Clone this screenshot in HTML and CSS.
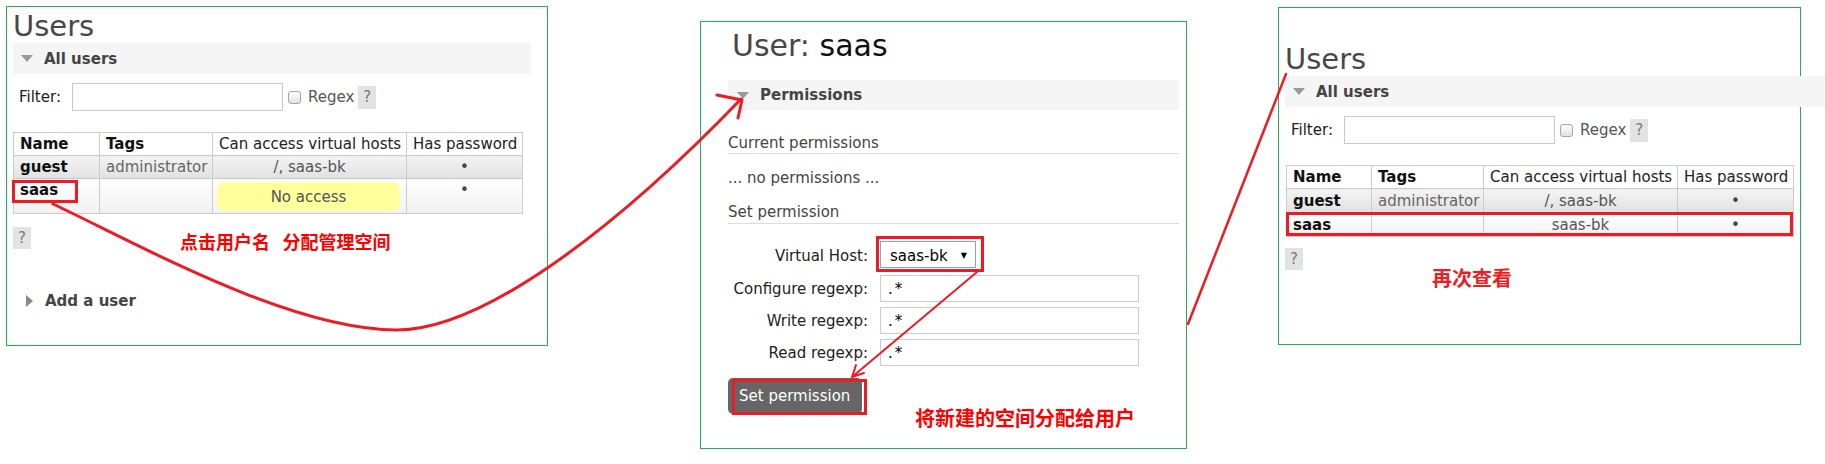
FILE: index.html
```html
<!DOCTYPE html>
<html>
<head>
<meta charset="utf-8">
<title>Users</title>
<link rel="stylesheet" href="styles.css">
</head>
<body>
<div class="canvas">
  <section class="panel p1">
    <h1 class="title">Users</h1>
    <div class="sect open"><span class="tri-down"></span>All users</div>
    <div class="filter">
      <label class="flabel">Filter:</label>
      <input class="ftext" type="text">
      <input class="chk" type="checkbox">
      <span class="regex">Regex</span>
      <span class="help">?</span>
    </div>
    <table class="list">
      <colgroup><col class="c1"><col class="c2"><col class="c3"><col class="c4"></colgroup>
      <thead>
        <tr><th class="b">Name</th><th class="b">Tags</th><th class="n">Can access virtual hosts</th><th class="n">Has password</th></tr>
      </thead>
      <tbody>
        <tr class="alt1"><td class="name">guest</td><td class="tags">administrator</td><td class="c">/, saas-bk</td><td class="c dot">•</td></tr>
        <tr class="alt2"><td class="name">saas</td><td></td><td class="wcell"><div class="warn">No access</div></td><td class="c dot">•</td></tr>
      </tbody>
    </table>
    <span class="help help-block">?</span>
    <div class="sect closed"><span class="tri-right"></span>Add a user</div>
    <p class="note n1">点击用户名&nbsp;&nbsp;分配管理空间</p>
  </section>

  <section class="panel p2">
    <h1 class="title">User: <span class="uname">saas</span></h1>
    <div class="sect open"><span class="tri-down"></span>Permissions</div>
    <h3 class="sub s1">Current permissions</h3>
    <p class="empty">... no permissions ...</p>
    <h3 class="sub s2">Set permission</h3>
    <div class="form">
      <label>Virtual Host:</label>
      <div class="select"><span>saas-bk</span><span class="arrow">▼</span></div>
      <label>Configure regexp:</label>
      <input type="text" value=".*">
      <label>Write regexp:</label>
      <input type="text" value=".*">
      <label>Read regexp:</label>
      <input type="text" value=".*">
    </div>
    <button class="btn" type="button">Set permission</button>
    <p class="note n2">将新建的空间分配给用户</p>
  </section>

  <section class="panel p3">
    <h1 class="title">Users</h1>
    <div class="sect open"><span class="tri-down"></span>All users</div>
    <div class="filter">
      <label class="flabel">Filter:</label>
      <input class="ftext" type="text">
      <input class="chk" type="checkbox">
      <span class="regex">Regex</span>
      <span class="help">?</span>
    </div>
    <table class="list">
      <colgroup><col class="c1"><col class="c2"><col class="c3"><col class="c4"></colgroup>
      <thead>
        <tr><th class="b">Name</th><th class="b">Tags</th><th class="n">Can access virtual hosts</th><th class="n">Has password</th></tr>
      </thead>
      <tbody>
        <tr class="alt1"><td class="name">guest</td><td class="tags">administrator</td><td class="c">/, saas-bk</td><td class="c dot">•</td></tr>
        <tr class="alt2"><td class="name">saas</td><td></td><td class="c">saas-bk</td><td class="c dot">•</td></tr>
      </tbody>
    </table>
    <span class="help help-block">?</span>
    <p class="note n3">再次查看</p>
  </section>
</div>

<svg class="marks" width="1825" height="464" viewBox="0 0 1825 464">
  <g fill="none" stroke="#ed1c24" stroke-width="3" stroke-linecap="round" stroke-linejoin="round">
    <path d="M53 204 C140 245 290 330 397 330 C480 330 610 235 741 99"/>
    <path d="M717 95 L742 100 L738 118"/>
    <path d="M977 272 L852 377 M856 365 L852 377 L864 373" stroke-width="2"/>
    <path d="M1188 324 L1286 74" stroke-width="2.5"/>
  </g>
  <g fill="none" stroke="#ed1c24" stroke-width="3" stroke-linejoin="miter">
    <rect x="13.5" y="181.5" width="63" height="20"/>
    <rect x="877.5" y="237.5" width="105" height="33"/>
    <rect x="733.5" y="380.5" width="132" height="33"/>
    <rect x="1287.5" y="213.5" width="504" height="21"/>
  </g>
</svg>
</body>
</html>
```

FILE: styles.css
```css
* { box-sizing: border-box; }

html, body { margin: 0; padding: 0; }

body {
  width: 1825px;
  height: 464px;
  overflow: hidden;
  position: relative;
  background: #fff;
  font-family: "DejaVu Sans", Verdana, sans-serif;
  font-size: 15px;
  line-height: 18px;
  color: #444;
}

.canvas {
  display: flex;
  align-items: flex-start;
}

.panel {
  position: relative;
  border: 1px solid #22b14c;
}

.p1 { margin-left: 6px; margin-top: 6px; width: 542px; height: 340px; padding: 0 6px; }
.p2 { margin-left: 152px; margin-top: 21px; width: 487px; height: 428px; padding: 0 0 0 27px; }
.p3 { margin-left: 91px; margin-top: 7px; width: 523px; height: 338px; padding: 0 6px; }

.title {
  margin: 3px 0 0;
  font-size: 29px;
  line-height: 33px;
  font-weight: normal;
  color: #484848;
}
.p3 .title { margin-top: 35px; }
.p2 .title { font-size: 30px; line-height: 34px; margin-top: 7px; padding-left: 4px; }
.uname { color: #111; }

.sect {
  display: flex;
  align-items: center;
  height: 31px;
  font-weight: bold;
  color: #444;
}
.sect.open { background: #f5f5f5; padding-left: 8px; }
.p1 .sect.open { width: 518px; }
.p3 .sect.open { width: 540px; }
.p2 .sect.open { width: 451px; height: 30px; margin-top: 17px; padding-left: 9px; }
.sect.closed { margin-top: 36px; padding-left: 13px; }

.tri-down {
  width: 0; height: 0;
  border-left: 6.5px solid transparent;
  border-right: 6.5px solid transparent;
  border-top: 7px solid #9a9a9a;
  margin-right: 11px;
}
.tri-right {
  width: 0; height: 0;
  border-top: 6.5px solid transparent;
  border-bottom: 6.5px solid transparent;
  border-left: 7px solid #8a8a8a;
  margin-right: 12px;
}

.filter {
  display: flex;
  align-items: center;
  margin-top: 9px;
  padding-left: 6px;
  height: 28px;
  color: #222;
}
.ftext {
  width: 211px;
  height: 28px;
  border: 1px solid #c8c8c8;
  margin: 0 0 0 11px;
  padding: 0;
  background: #fff;
}
.chk {
  appearance: none;
  -webkit-appearance: none;
  width: 13px;
  height: 13px;
  margin: 0 0 0 5px;
  border: 1px solid #a5a5a5;
  border-radius: 3px;
  background: linear-gradient(#fdfdfd, #e2e2e2);
}
.regex { margin-left: 7px; color: #555; }
.help {
  display: inline-block;
  width: 18px;
  height: 23px;
  line-height: 23px;
  text-align: center;
  background: #e3e3e3;
  color: #777;
  margin-left: 4px;
}
.help-block { display: block; margin: 13px 0 0; height: 22px; line-height: 22px; }
.p3 .help-block { margin-top: 11px; }

.list {
  border-collapse: collapse;
  table-layout: fixed;
  width: 509px;
  margin-top: 21px;
}
.p3 .list { margin-left: 1px; width: 507px; }
.c1 { width: 86px; }
.c2 { width: 113px; }
.c3 { width: 194px; }
.c4 { width: 116px; }
.p3 .c1 { width: 85px; }
.p3 .c2 { width: 112px; }

.list th, .list td {
  border: 1px solid #ccc;
  padding: 2px 6px;
  line-height: 18px;
  text-align: left;
  vertical-align: top;
  white-space: nowrap;
  overflow: visible;
}
.list th { background: #fff; font-weight: normal; color: #222; }
.list th.b { font-weight: bold; color: #111; }
.list th.n { text-align: center; }
.list td.name { font-weight: bold; color: #111; }
.list td.tags { color: #666; }
.list td.c { text-align: center; color: #555; }
.list td.dot { color: #444; }
.p3 .list td { padding-top: 3px; }

.alt1 td { background: linear-gradient(#f4f4f4, #e1e1e1); }
.alt2 td { background: linear-gradient(#ffffff, #f1f1f1); }

.list td.wcell { padding: 3px 6px 2px 4px; }
.warn {
  background: #ffff9c;
  border-radius: 8px;
  text-align: center;
  padding: 6px 0 5px;
  color: #555;
}

.sub {
  margin: 24px 0 0;
  width: 451px;
  font-size: 15px;
  font-weight: normal;
  line-height: 18px;
  padding-bottom: 1px;
  border-bottom: 1px solid #ddd;
  color: #444;
}
.sub.s2 { margin-top: 16px; padding-bottom: 2px; }
.empty { margin: 15px 0 0; color: #444; }

.form {
  display: grid;
  grid-template-columns: 140px 259px;
  column-gap: 12px;
  row-gap: 5px;
  align-items: baseline;
  margin-top: 17px;
  color: #222;
}
.form label { text-align: right; }
.select {
  width: 96px;
  height: 27px;
  border: 1px solid #7ea6d6;
  display: flex;
  align-items: center;
  padding: 2px 8px 0 9px;
  color: #000;
  margin-bottom: 2px;
  background: #fff;
}
.select .arrow { margin-left: auto; font-size: 8px; line-height: 10px; }
.form input {
  width: 259px;
  height: 27px;
  border: 1px solid #ccc;
  padding: 0 0 0 7px;
  margin: 0;
  font: 15px "DejaVu Sans", Verdana, sans-serif;
  letter-spacing: 2px;
  color: #000;
  background: #fff;
}

.btn {
  display: block;
  margin-top: 12px;
  width: 134px;
  height: 36px;
  background: #666;
  color: #fff;
  border: 0;
  border-radius: 5px;
  font: 15px "DejaVu Sans", Verdana, sans-serif;
  text-align: left;
  padding: 0 0 0 11px;
}

.note {
  position: absolute;
  margin: 0;
  font-family: "DejaVu Sans", "Noto Sans CJK SC", sans-serif;
  font-weight: bold;
  color: #f00;
  white-space: nowrap;
}
.n1 { left: 173px; top: 227px; font-size: 18px; line-height: 18px; }
.n2 { left: 214px; top: 387px; font-size: 20px; line-height: 20px; }
.n3 { left: 153px; top: 261px; font-size: 20px; line-height: 20px; color: #ee1c24; }

.marks {
  position: absolute;
  left: 0;
  top: 0;
  pointer-events: none;
}
```
